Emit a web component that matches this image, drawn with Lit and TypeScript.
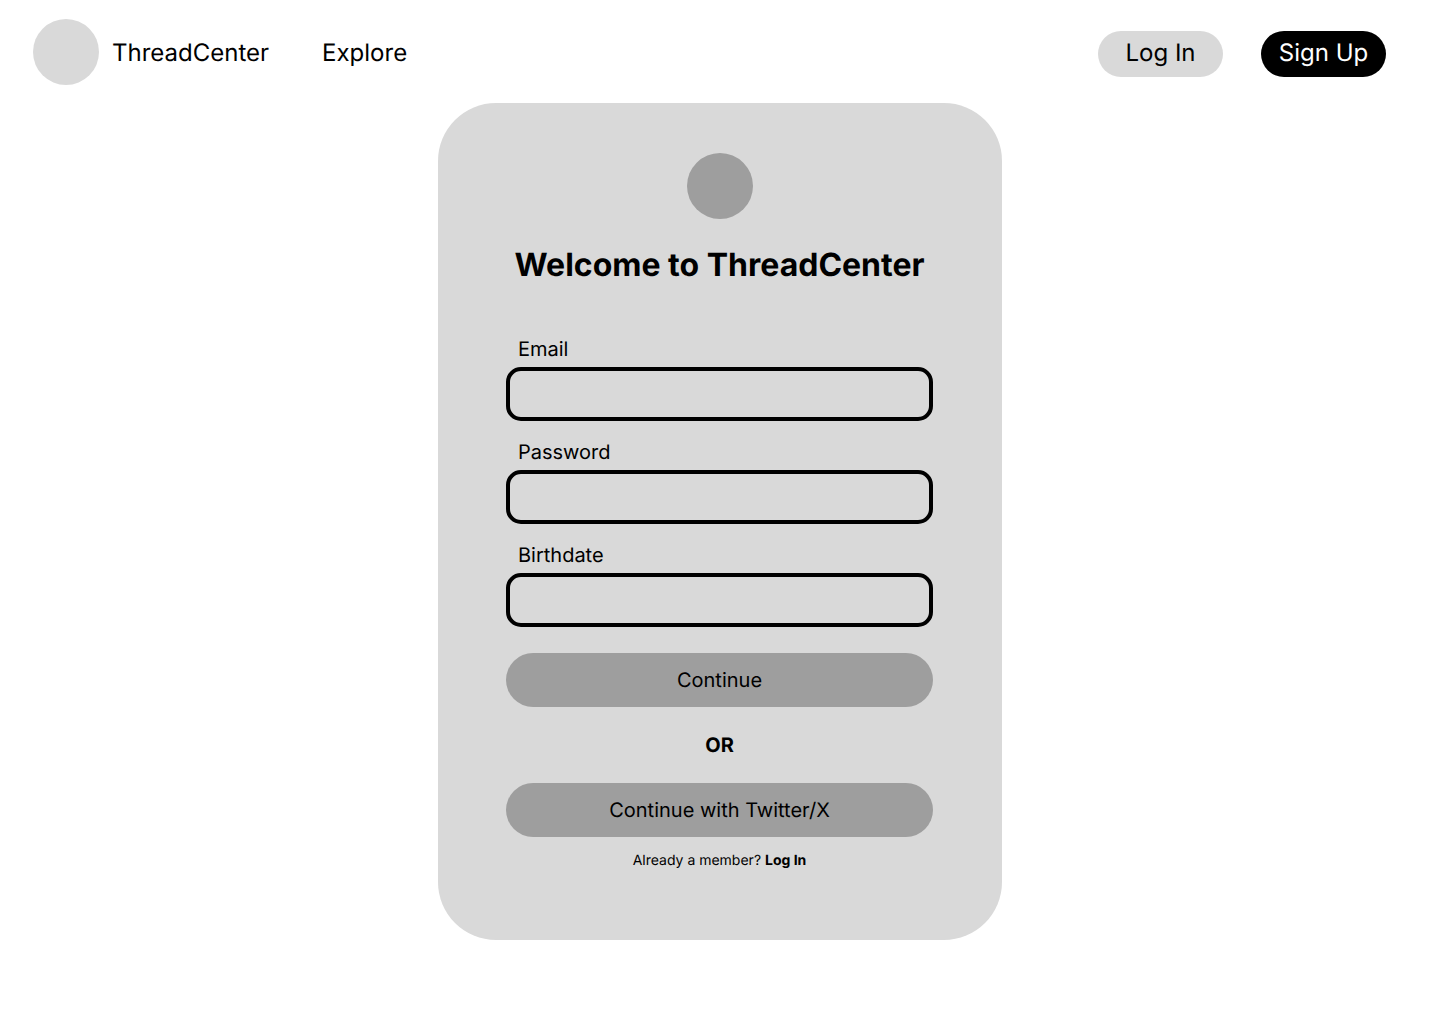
import { LitElement, html, css } from "lit";
import { customElement } from "lit/decorators.js";

interface Field {
  id: string;
  label: string;
  type: string;
  autocomplete: string;
}

const FIELDS: Field[] = [
  { id: "email", label: "Email", type: "email", autocomplete: "email" },
  { id: "password", label: "Password", type: "password", autocomplete: "new-password" },
  { id: "birthdate", label: "Birthdate", type: "text", autocomplete: "bday" },
];

@customElement("site-header")
class SiteHeader extends LitElement {
  static styles = css`
    :host {
      display: block;
    }
    .bar {
      display: flex;
      align-items: center;
      justify-content: space-between;
      padding: 19px 54px 18px 33px;
      font-size: 24px;
      line-height: 29px;
    }
    nav {
      display: flex;
      align-items: center;
      gap: 53px;
    }
    a {
      color: inherit;
      text-decoration: none;
    }
    .brand {
      display: flex;
      align-items: center;
      gap: 13px;
    }
    .mark {
      width: 66px;
      height: 66px;
      border-radius: 50%;
      background: #d9d9d9;
    }
    .actions {
      display: flex;
      gap: 38px;
      padding-top: 4px;
    }
    button {
      width: 125px;
      height: 46px;
      padding: 0 0 3px;
      border: 0;
      border-radius: 23px;
      background: #d9d9d9;
      color: #000;
      font: inherit;
      text-rendering: inherit;
      cursor: pointer;
    }
    .primary {
      background: #000;
      color: #fff;
    }
  `;

  render() {
    return html`
      <header class="bar">
        <nav aria-label="Main">
          <a class="brand" href="#home"><span class="mark"></span>ThreadCenter</a>
          <a href="#explore">Explore</a>
        </nav>
        <div class="actions">
          <button type="button">Log In</button>
          <button type="button" class="primary">Sign Up</button>
        </div>
      </header>
    `;
  }
}

@customElement("signup-card")
class SignupCard extends LitElement {
  static styles = css`
    :host {
      display: block;
      width: 100%;
      max-width: 564px;
    }
    .card {
      box-sizing: border-box;
      display: flex;
      flex-direction: column;
      align-items: center;
      padding: 50px 69px 70px 68px;
      border-radius: 58px;
      background: #d9d9d9;
      font-size: 20px;
      line-height: 24px;
    }
    .mark {
      width: 66px;
      height: 66px;
      border-radius: 50%;
      background: #9e9e9e;
    }
    h1 {
      margin: 26px 0 52px;
      font-size: 32px;
      line-height: 40px;
      font-weight: 700;
      white-space: nowrap;
    }
    form {
      display: flex;
      flex-direction: column;
      align-self: stretch;
      gap: 19px;
    }
    .field {
      display: flex;
      flex-direction: column;
      gap: 6px;
    }
    label {
      padding-left: 12px;
    }
    input {
      box-sizing: border-box;
      width: 100%;
      height: 54px;
      margin: 0;
      padding: 0 12px;
      border: 4px solid #000;
      border-radius: 15px;
      background: transparent;
      color: #000;
      font: inherit;
    }
    button {
      width: 100%;
      height: 54px;
      padding: 0;
      border: 0;
      border-radius: 27px;
      background: #9e9e9e;
      color: #000;
      font: inherit;
      text-rendering: inherit;
      cursor: pointer;
    }
    .submit {
      margin-top: 7px;
    }
    .or {
      margin: 26px 0;
      font-weight: 700;
    }
    .member {
      margin: 15px 0 0;
      font-size: 14px;
      line-height: 18px;
    }
    .member a {
      color: inherit;
      font-weight: 700;
      text-decoration: none;
    }
  `;

  private submit(event: Event) {
    event.preventDefault();
  }

  render() {
    return html`
      <section class="card">
        <span class="mark"></span>
        <h1>Welcome to ThreadCenter</h1>
        <form novalidate @submit=${this.submit}>
          ${FIELDS.map(
            (field) => html`
              <div class="field">
                <label for=${field.id}>${field.label}</label>
                <input id=${field.id} name=${field.id} type=${field.type} autocomplete=${field.autocomplete} />
              </div>
            `,
          )}
          <button type="submit" class="submit">Continue</button>
        </form>
        <div class="or">OR</div>
        <button type="button">Continue with Twitter/X</button>
        <p class="member">Already a member? <a href="#login">Log In</a></p>
      </section>
    `;
  }
}

@customElement("app-root")
class AppRoot extends LitElement {
  static styles = css`
    :host {
      display: block;
      min-height: 100vh;
      background: #fff;
      color: #000;
      font-family: Inter, "Liberation Sans", sans-serif;
      text-rendering: geometricPrecision;
    }
    main {
      display: flex;
      justify-content: center;
    }
  `;

  render() {
    return html`
      <site-header></site-header>
      <main><signup-card></signup-card></main>
    `;
  }
}
